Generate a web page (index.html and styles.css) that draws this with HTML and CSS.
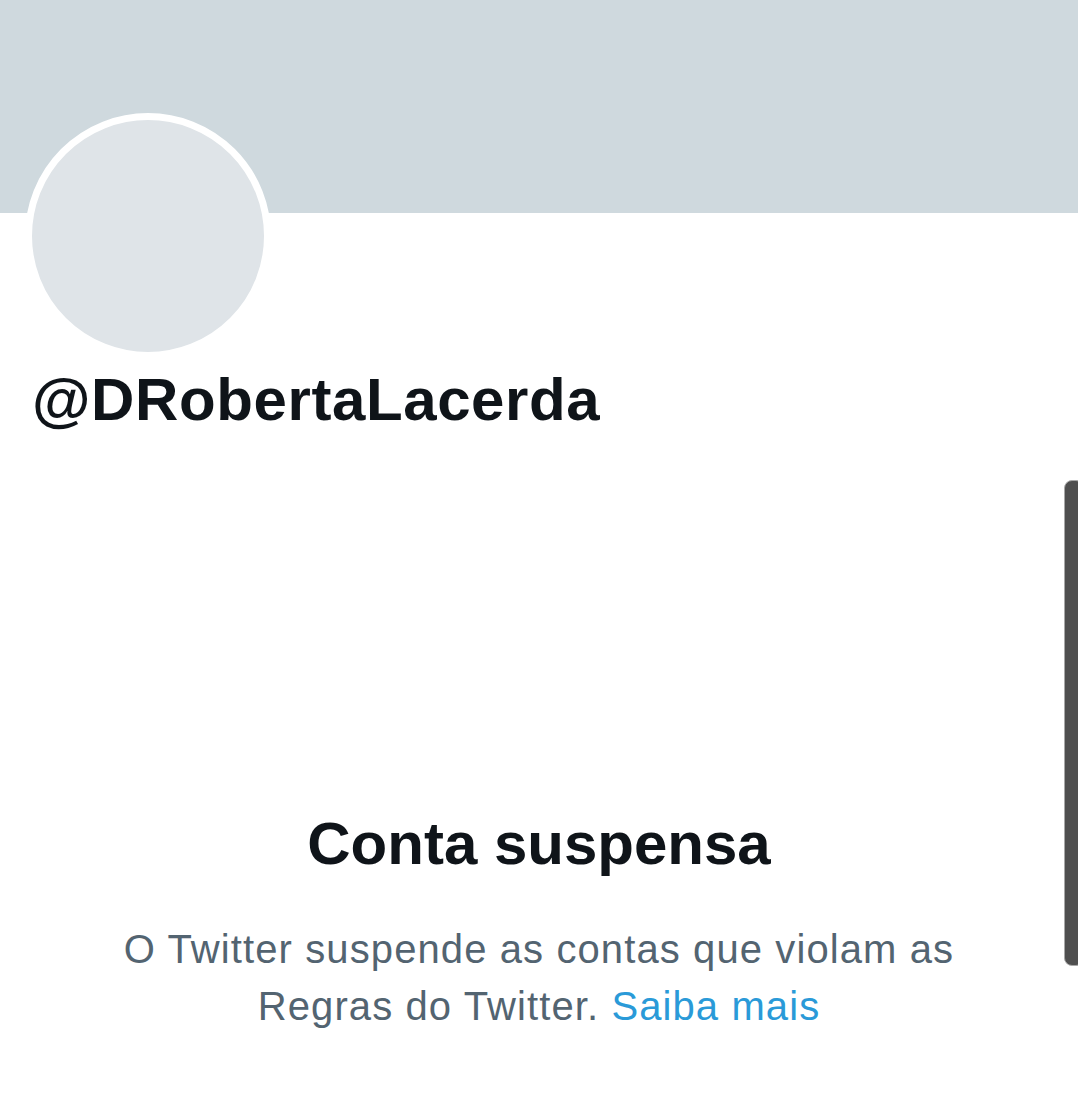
FILE: index.html
```html
<!DOCTYPE html>
<html lang="pt">
<head>
<meta charset="utf-8">
<title>@DRobertaLacerda</title>
<link rel="stylesheet" href="styles.css">
</head>
<body>
<div class="page">
  <div class="banner"></div>
  <div class="profile">
    <div class="avatar"></div>
    <h1 class="handle">@DRobertaLacerda</h1>
  </div>
  <div class="notice">
    <h2 class="notice-title">Conta suspensa</h2>
    <p class="notice-text">O Twitter suspende as contas que violam as Regras do Twitter. <a class="link" href="#">Saiba mais</a></p>
  </div>
</div>
<div class="scrollbar"></div>
</body>
</html>
```
FILE: styles.css
```css
html, body {
  margin: 0;
  padding: 0;
  background: #ffffff;
}
body {
  font-family: "Liberation Sans", Arial, sans-serif;
  width: 1078px;
  height: 1115px;
  overflow: hidden;
  position: relative;
}
.page {
  display: flex;
  flex-direction: column;
}
.banner {
  height: 213px;
  background: #cfd9de;
}
.profile {
  display: flex;
  flex-direction: column;
  align-items: flex-start;
  padding: 0 32px;
  margin-top: -100px;
}
.avatar {
  width: 232px;
  height: 232px;
  border-radius: 50%;
  background: #dfe4e8;
  border: 7px solid #ffffff;
  margin-left: -7px;
}
.handle {
  margin: 5px 0 0 0;
  font-size: 60px;
  line-height: 72px;
  font-weight: 700;
  color: #0f1419;
  letter-spacing: 0.6px;
}
.notice {
  display: flex;
  flex-direction: column;
  align-items: center;
  margin-top: 372px;
  text-align: center;
}
.notice-title {
  margin: 0;
  font-size: 60px;
  line-height: 72px;
  font-weight: 700;
  color: #0f1419;
}
.notice-text {
  margin: 41px 0 0 0;
  width: 860px;
  font-size: 40px;
  line-height: 57px;
  color: #536471;
  letter-spacing: 1.1px;
}
.link {
  color: #2a9ad8;
  text-decoration: none;
}
.scrollbar {
  position: absolute;
  left: 1064px;
  top: 480px;
  width: 20px;
  height: 486px;
  background: #4f4f4f;
  border: 1px solid #a8a8a8;
  border-radius: 8px;
  box-sizing: border-box;
}
```
